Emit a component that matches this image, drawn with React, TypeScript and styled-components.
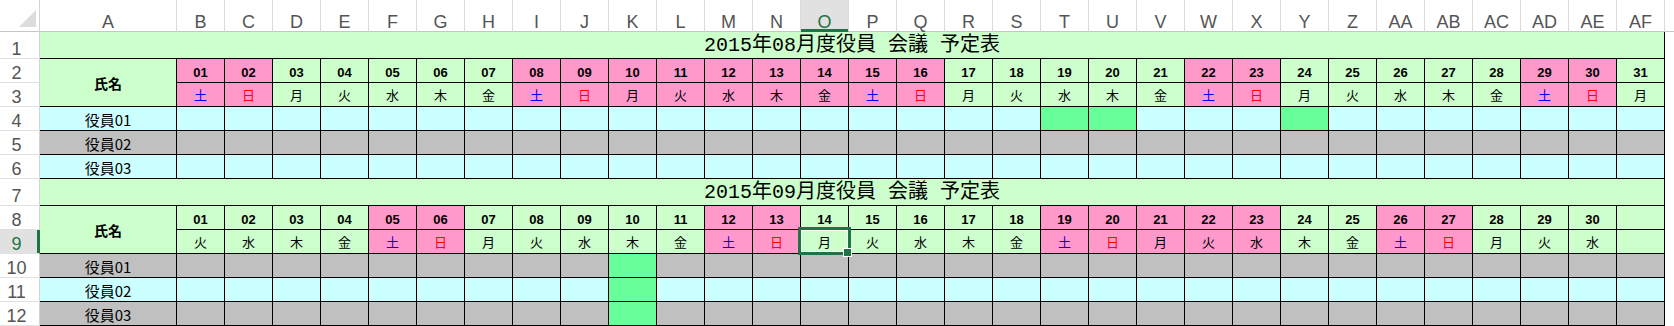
import React from 'react';
import styled, { createGlobalStyle, css } from 'styled-components';

const GREEN = '#ccffcc';
const PINK = '#ff99cc';
const CYAN = '#ccffff';
const GREY = '#c0c0c0';
const BUSY = '#66ff99';
const EXCEL = '#217346';

const GlobalStyle = createGlobalStyle`
  html, body {
    margin: 0;
    padding: 0;
    background: #ffffff;
  }
  body {
    font-family: "Noto Sans CJK JP", sans-serif;
  }
`;

const Sheet = styled.div`
  display: grid;
  grid-template-columns: 40px 137px repeat(31, 48px) 9px;
  grid-template-rows: 32px 27px repeat(5, 24px) 27px repeat(5, 24px);
  width: 1674px;
  height: 326px;
  overflow: hidden;
  background: #ffffff;
`;

const Corner = styled.div`
  box-sizing: border-box;
  position: relative;
  border-right: 1px solid #d4d4d4;
  border-bottom: 1px solid #c6c6c6;

  &::after {
    content: '';
    position: absolute;
    left: 19px;
    top: 10px;
    width: 17px;
    height: 17px;
    background: #dcdcdc;
    clip-path: polygon(100% 0, 100% 100%, 0 100%);
  }
`;

const ColHead = styled.div<{ $selected?: boolean }>`
  box-sizing: border-box;
  display: flex;
  align-items: flex-end;
  justify-content: center;
  border-right: 1px solid #dadada;
  border-bottom: 1px solid #c6c6c6;
  font-family: "Liberation Sans", Arial, sans-serif;
  font-size: 18px;
  line-height: 1;
  color: #555555;

  ${(p) =>
    p.$selected &&
    css`
      background: #e1e1e1;
      color: ${EXCEL};
      border-bottom-color: ${EXCEL};
      box-shadow: inset 0 -2px 0 ${EXCEL};
    `}
`;

const HeadGutter = styled.div`
  box-sizing: border-box;
  border-bottom: 1px solid #c6c6c6;
`;

const RowHead = styled.div<{ $selected?: boolean }>`
  box-sizing: border-box;
  display: flex;
  align-items: flex-end;
  justify-content: center;
  padding-right: 6px;
  border-right: 1px solid #d4d4d4;
  border-bottom: 1px solid #e1e1e1;
  font-family: "Liberation Sans", Arial, sans-serif;
  font-size: 18px;
  line-height: 1;
  color: #555555;

  ${(p) =>
    p.$selected &&
    css`
      background: #e1e1e1;
      color: ${EXCEL};
      border-right-color: ${EXCEL};
      box-shadow: inset -2px 0 0 ${EXCEL};
    `}
`;

const Cell = styled.div<{ $bg?: string }>`
  box-sizing: border-box;
  display: flex;
  align-items: center;
  justify-content: center;
  border-right: 1px solid #000000;
  border-bottom: 1px solid #000000;
  background: ${(p) => p.$bg || 'transparent'};
  white-space: nowrap;
  color: #000000;
`;

const TitleCell = styled(Cell)`
  grid-column: span 32;
  align-items: flex-end;
  padding-bottom: 2px;
  font-family: "Liberation Mono", "Noto Sans CJK JP", monospace;
  font-size: 20px;
  line-height: 20px;
`;

const NameHead = styled(Cell)`
  grid-row: span 2;
  font-family: "Noto Sans CJK JP", sans-serif;
  font-size: 14px;
  font-weight: 700;
  padding-top: 1px;
`;

const DateCell = styled(Cell)`
  padding-top: 3px;
  font-family: "Liberation Sans", Arial, sans-serif;
  font-size: 13px;
  font-weight: 700;
  line-height: 13px;
`;

const DayCell = styled(Cell)<{ $color: string }>`
  position: relative;
  font-family: "Noto Sans CJK JP", sans-serif;
  font-size: 13px;
  line-height: 13px;
  color: ${(p) => p.$color};
`;

const NameCell = styled(Cell)`
  padding-top: 2px;
  font-family: "Noto Sans CJK JP", sans-serif;
  font-size: 15px;
  font-weight: 400;
  line-height: 15px;
`;

const Gutter = styled.div``;

const Selection = styled.div`
  position: absolute;
  left: -3px;
  top: -3px;
  right: -3px;
  bottom: -2px;
  border: 3px solid ${EXCEL};
  box-shadow: inset 0 0 0 1px #ffffff;
  pointer-events: none;
  z-index: 2;
`;

const FillHandle = styled.div`
  position: absolute;
  right: -4px;
  bottom: -4px;
  width: 9px;
  height: 9px;
  box-sizing: border-box;
  background: ${EXCEL};
  border: 1px solid #ffffff;
  z-index: 3;
`;

const DAY_NAMES = ['日', '月', '火', '水', '木', '金', '土'];

const COLUMNS = [
  'A', 'B', 'C', 'D', 'E', 'F', 'G', 'H', 'I', 'J', 'K', 'L', 'M', 'N', 'O', 'P',
  'Q', 'R', 'S', 'T', 'U', 'V', 'W', 'X', 'Y', 'Z', 'AA', 'AB', 'AC', 'AD', 'AE', 'AF',
];

interface Member {
  name: string;
  bg: string;
  busy: number[];
}

interface Month {
  title: string;
  days: number;
  firstWeekday: number;
  holidays: number[];
  members: Member[];
}

const MONTHS: Month[] = [
  {
    title: '2015年08月度役員 会議 予定表',
    days: 31,
    firstWeekday: 6,
    holidays: [1, 2, 8, 9, 10, 11, 12, 13, 14, 15, 16, 22, 23, 29, 30],
    members: [
      { name: '役員01', bg: CYAN, busy: [19, 20, 24] },
      { name: '役員02', bg: GREY, busy: [] },
      { name: '役員03', bg: CYAN, busy: [] },
    ],
  },
  {
    title: '2015年09月度役員 会議 予定表',
    days: 30,
    firstWeekday: 2,
    holidays: [5, 6, 12, 13, 19, 20, 21, 22, 23, 26, 27],
    members: [
      { name: '役員01', bg: GREY, busy: [10] },
      { name: '役員02', bg: CYAN, busy: [10] },
      { name: '役員03', bg: GREY, busy: [10] },
    ],
  },
];

const SELECTED_ROW = 9;
const SELECTED_COL = 'O';

const pad = (n: number) => (n < 10 ? '0' + n : String(n));

const dayColor = (name: string) => {
  if (name === '土') return '#0000ff';
  if (name === '日') return '#ff0000';
  return '#000000';
};

const slots = Array.from({ length: 31 }, (_, i) => i + 1);

function MonthBlock({ month, firstRow }: { month: Month; firstRow: number }) {
  const dateRow = firstRow + 1;
  const dayRow = firstRow + 2;

  return (
    <>
      <RowHead>{firstRow}</RowHead>
      <TitleCell $bg={GREEN}>{month.title}</TitleCell>
      <Gutter />

      <RowHead>{dateRow}</RowHead>
      <NameHead $bg={GREEN}>氏名</NameHead>
      {slots.map((d) => (
        <DateCell key={d} $bg={month.holidays.includes(d) ? PINK : GREEN}>
          {d <= month.days ? pad(d) : ''}
        </DateCell>
      ))}
      <Gutter />

      <RowHead $selected={dayRow === SELECTED_ROW}>{dayRow}</RowHead>
      {slots.map((d) => {
        const name = d <= month.days ? DAY_NAMES[(month.firstWeekday + d - 1) % 7] : '';
        const selected = dayRow === SELECTED_ROW && COLUMNS[d] === SELECTED_COL;
        return (
          <DayCell key={d} $bg={month.holidays.includes(d) ? PINK : GREEN} $color={dayColor(name)}>
            {name}
            {selected && (
              <>
                <Selection />
                <FillHandle />
              </>
            )}
          </DayCell>
        );
      })}
      <Gutter />

      {month.members.map((m, i) => (
        <React.Fragment key={m.name}>
          <RowHead>{firstRow + 3 + i}</RowHead>
          <NameCell $bg={m.bg}>{m.name}</NameCell>
          {slots.map((d) => (
            <Cell key={d} $bg={m.busy.includes(d) ? BUSY : m.bg} />
          ))}
          <Gutter />
        </React.Fragment>
      ))}
    </>
  );
}

export default function App() {
  return (
    <>
      <GlobalStyle />
      <Sheet>
        <Corner />
        {COLUMNS.map((c) => (
          <ColHead key={c} $selected={c === SELECTED_COL}>
            {c}
          </ColHead>
        ))}
        <HeadGutter />
        <MonthBlock month={MONTHS[0]} firstRow={1} />
        <MonthBlock month={MONTHS[1]} firstRow={7} />
      </Sheet>
    </>
  );
}
